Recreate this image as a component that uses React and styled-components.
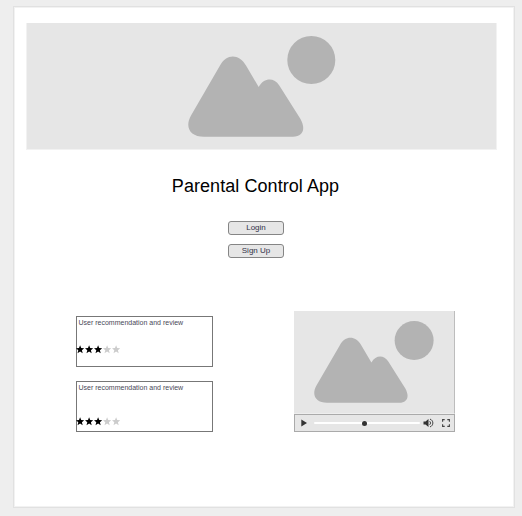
import React from "react";
import styled, { createGlobalStyle } from "styled-components";

const GlobalStyle = createGlobalStyle`
  * { box-sizing: border-box; }
  body {
    margin: 0;
    background: #eeeeee;
    font-family: "Liberation Sans", Arial, sans-serif;
  }
`;

const Canvas = styled.div`
  height: 516px;
  padding: 6px 7px 8px 13px;
`;

const Page = styled.main`
  width: 502px;
  height: 502px;
  padding: 16px 16px 0 11px;
  background: #fff;
  border: 1px solid #e1e1e1;
  box-shadow: inset 0 0 0 1px #f2f2f2;
  display: flex;
  flex-direction: column;
  align-items: center;
`;

const Banner = styled.header`
  width: 471px;
  height: 127px;
  margin-left: 1px;
  padding: 13px 0 0 161px;
  flex: none;
  align-self: flex-start;
  border: 1px solid #f2f2f2;
  border-top: 0;
  background: #e6e6e6;
`;

const Picture = styled.svg`
  display: block;
  width: ${(p) => p.$width}px;
  height: ${(p) => p.$height}px;
  fill: #b3b3b3;
`;

const Title = styled.h1`
  margin: 25px 0 0;
  padding-right: 12px;
  width: 100%;
  text-align: center;
  font-size: 18px;
  line-height: 22px;
  letter-spacing: 0.06px;
  font-weight: 400;
  color: #000;
  white-space: nowrap;
`;

const Actions = styled.div`
  display: flex;
  flex-direction: column;
  gap: 9px;
  margin: 24px 11px 0 0;
`;

const Button = styled.button`
  width: 56px;
  height: 14px;
  padding: 0 0 1px;
  border: 1px solid #858585;
  border-radius: 3px;
  background: #e6e6e6;
  color: #333349;
  font: 8px/10px "Liberation Sans", Arial, sans-serif;
  display: flex;
  align-items: center;
  justify-content: center;
`;

const Content = styled.section`
  width: 100%;
  display: flex;
  align-items: flex-start;
  padding-left: 51px;
  margin-top: 53px;
  gap: 81px;
`;

const Reviews = styled.div`
  display: flex;
  flex-direction: column;
  gap: 14px;
  padding-top: 5px;
`;

const ReviewCard = styled.article`
  width: 137px;
  height: 51px;
  border: 1px solid #777;
  display: flex;
  flex-direction: column;
  justify-content: space-between;
  padding: 1px 0 ${(p) => p.$bottom}px 0;
`;

const ReviewText = styled.p`
  margin: 0 0 0 1.5px;
  font-size: 7px;
  line-height: 9px;
  color: #484858;
  white-space: nowrap;
`;

const Stars = styled.svg`
  display: block;
  width: 46px;
  height: 9px;
  margin-left: -1px;
`;

const Player = styled.div`
  width: 161px;
`;

const Screen = styled.div`
  height: 103px;
  padding: 10px 0 0 20px;
  background: #e6e6e6;
  border-right: 1px solid #bdbdbd;
  border-bottom: 1px solid #eeeeee;
`;

const Controls = styled.div`
  height: 18px;
  border: 1px solid #aaa;
  background: #e6e6e6;
  display: flex;
  align-items: center;
  padding: 0 3px 0 6px;
`;

const PlayIcon = styled.svg`
  width: 6px;
  height: 8px;
  fill: #333;
`;

const Track = styled.div`
  width: 106px;
  height: 2px;
  margin-left: 7px;
  border-radius: 1px;
  background: #fff;
  display: flex;
  align-items: center;
  padding-left: 47.5px;
`;

const Knob = styled.span`
  width: 5px;
  height: 5px;
  border-radius: 50%;
  background: #333;
  flex: none;
`;

const VolumeIcon = styled.svg`
  width: 11px;
  height: 10px;
  margin-left: 3px;
`;

const ExpandIcon = styled.svg`
  width: 8px;
  height: 8px;
  margin-left: 8px;
`;

function Landscape({ width, height }) {
  return (
    <Picture $width={width} $height={height} viewBox="188 36 148 101">
      <circle cx="311.3" cy="60" r="24" />
      <path d="M204 136.7C190 136.7 184.5 127 191 115.5L220 65.5C226.5 53.5 239 53.5 246 65.5L258.7 87C264 77.5 274 77.3 279.3 85.5L300.5 119C306 129 303 136.7 293 136.7Z" />
    </Picture>
  );
}

function Rating({ value }) {
  return (
    <Stars viewBox="0 0 46 9">
      {[0, 1, 2, 3, 4].map((i) => (
        <path
          key={i}
          transform={`translate(${i * 9} 0)`}
          fill={i < value ? "#000" : "#ccc"}
          d="M4.1 0.3L5.2 3.1L8.2 3.3L5.9 5.2L6.7 8.2L4.1 6.6L1.5 8.2L2.3 5.2L0 3.3L3 3.1Z"
        />
      ))}
    </Stars>
  );
}

const reviews = [
  { id: 1, rating: 3, bottom: 12 },
  { id: 2, rating: 3, bottom: 5 },
];

export default function App() {
  return (
    <Canvas>
      <GlobalStyle />
      <Page>
        <Banner>
          <Landscape width={148} height={101} />
        </Banner>
        <Title>Parental Control App</Title>
        <Actions>
          <Button>Login</Button>
          <Button>Sign Up</Button>
        </Actions>
        <Content>
          <Reviews>
            {reviews.map((r) => (
              <ReviewCard key={r.id} $bottom={r.bottom}>
                <ReviewText>User recommendation and review</ReviewText>
                <Rating value={r.rating} />
              </ReviewCard>
            ))}
          </Reviews>
          <Player>
            <Screen>
              <Landscape width={120.2} height={82} />
            </Screen>
            <Controls>
              <PlayIcon viewBox="0 0 6 8">
                <path d="M0.3 0.5L6 4L0.3 7.5Z" />
              </PlayIcon>
              <Track>
                <Knob />
              </Track>
              <VolumeIcon viewBox="0 0 11 10">
                <path d="M0.5 3.4H2.5L5.5 0.9V9.1L2.5 6.6H0.5Z" fill="#333" />
                <path
                  d="M6.6 3.2C7.8 4 7.8 6 6.6 6.8M7 1.1C10.8 2.4 10.8 7.6 7 8.9"
                  fill="none"
                  stroke="#333"
                  strokeWidth="0.9"
                />
              </VolumeIcon>
              <ExpandIcon viewBox="0 0 8 8">
                <path
                  d="M0.6 2.7V0.6H2.7M5.3 0.6H7.4V2.7M7.4 5.3V7.4H5.3M2.7 7.4H0.6V5.3"
                  fill="none"
                  stroke="#444"
                  strokeWidth="1.1"
                />
              </ExpandIcon>
            </Controls>
          </Player>
        </Content>
      </Page>
    </Canvas>
  );
}
